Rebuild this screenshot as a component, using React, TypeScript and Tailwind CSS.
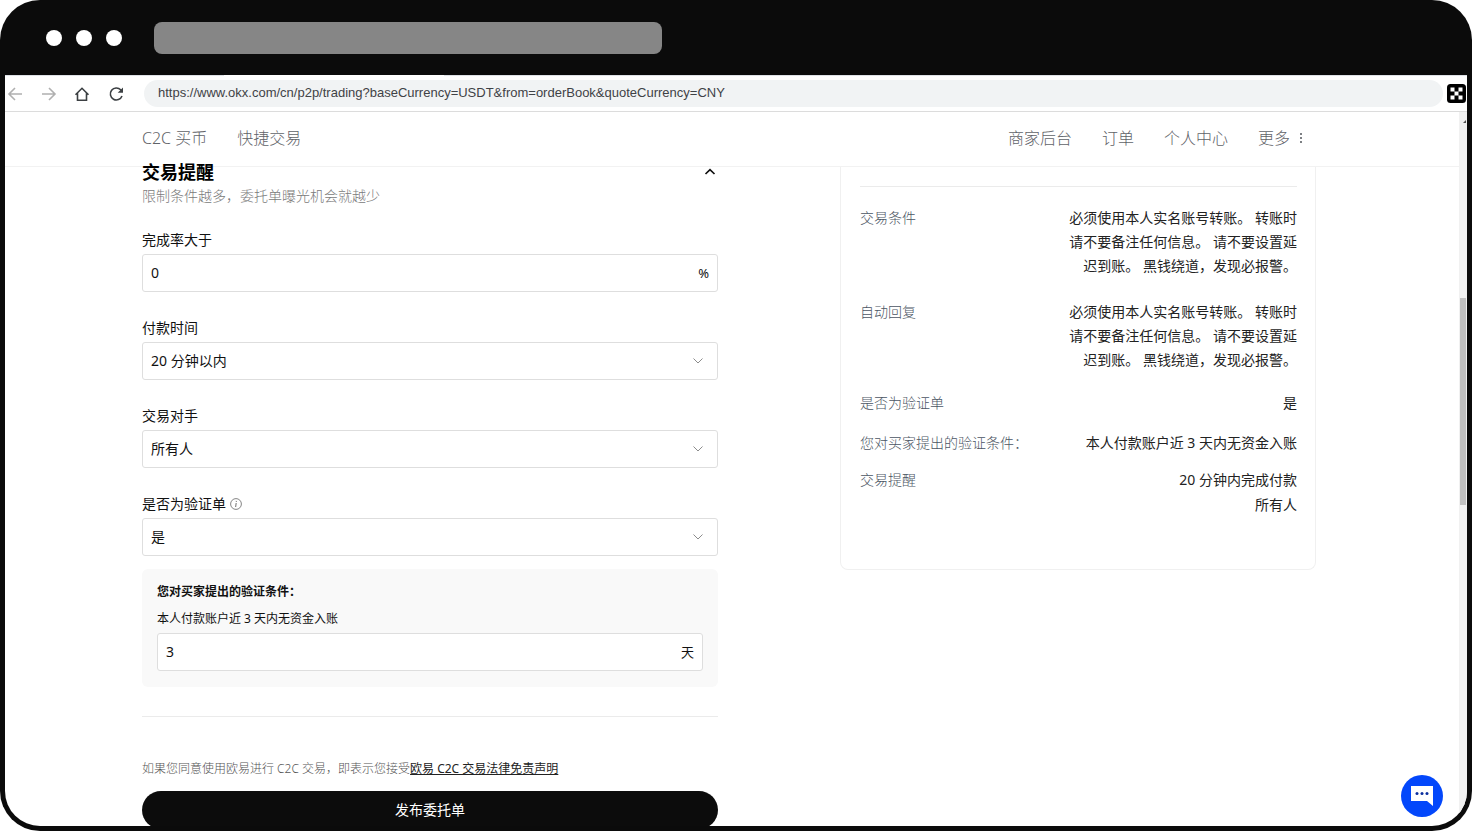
import { useState, type ReactNode } from "react";
import clsx from "clsx";

const TERMS =
  "必须使用本人实名账号转账。 转账时请不要备注任何信息。 请不要设置延迟到账。 黑钱绕道，发现必报警。";

const PAGE_URL =
  "https://www.okx.com/cn/p2p/trading?baseCurrency=USDT&from=orderBook&quoteCurrency=CNY";

function WindowBar() {
  return (
    <div className="flex h-[75px] shrink-0 items-center gap-3.5 pl-[41px]">
      <span className="size-4 rounded-full bg-white" />
      <span className="size-4 rounded-full bg-white" />
      <span className="size-4 rounded-full bg-white" />
      <span className="ml-[18px] h-8 w-[508px] rounded-lg bg-[#868686]" />
    </div>
  );
}

function ToolButton({ label, className, children }: { label: string; className: string; children: ReactNode }) {
  return (
    <button type="button" aria-label={label} className={className}>
      <svg width="18" height="18" viewBox="0 0 18 18" fill="none" stroke="currentColor" strokeWidth="1.6">
        {children}
      </svg>
    </button>
  );
}

function Toolbar() {
  return (
    <div className="shrink-0 border-b border-[#dcdcdc] bg-white">
      <div className="flex h-px">
        <span className="w-[15%] bg-[#dee1e6]" />
        <span className="w-[15%]" />
        <span className="flex-1 bg-[#dee1e6]" />
      </div>
      <div className="flex h-[35px] items-center pr-px">
        <div className="flex gap-4 pl-px">
          <ToolButton label="后退" className="text-[#b0b0b0]">
            <path d="M16 9H3M9 3L3 9l6 6" />
          </ToolButton>
          <ToolButton label="前进" className="text-[#b0b0b0]">
            <path d="M2 9h13M9 3l6 6-6 6" />
          </ToolButton>
          <ToolButton label="主页" className="text-[#3c4043]">
            <path d="M1.500 9.700L8 3.300l6.500 6.400M3.500 8.200v7h9v-7" />
          </ToolButton>
          <ToolButton label="刷新" className="text-[#3c4043]">
            <path d="M14 11a6 6 0 1 1-1.300-6.200l1.800 1.800" />
            <path d="M15 2.500v5.300H9.700z" fill="currentColor" stroke="none" />
          </ToolButton>
        </div>
        <input
          aria-label="网址"
          readOnly
          value={PAGE_URL}
          className="mr-1 ml-[18px] h-[27px] min-w-0 flex-1 rounded-full bg-[#f1f3f4] px-3.5 pb-[3px] font-['Liberation_Sans',sans-serif] text-[13px] text-[#3f4246] outline-none"
        />
        <button type="button" aria-label="OKX">
          <svg width="19" height="19" viewBox="0 0 19 19">
            <rect width="19" height="19" rx="3.500" fill="#000" />
            <path
              d="M3.500 3.500h4v4h-4zM11.500 3.500h4v4h-4zM7.500 7.500h4v4h-4zM3.500 11.500h4v4h-4zM11.500 11.500h4v4h-4z"
              fill="#fff"
            />
          </svg>
        </button>
      </div>
    </div>
  );
}

function SiteHeader() {
  return (
    <header className="flex h-[55px] shrink-0 items-center justify-between border-b border-[#f2f2f2] bg-white pr-[155px] pb-[3px] pl-[137px] text-base font-light text-[#5f6368]">
      <nav className="flex gap-[30px]">
        <a href="#c2c">C2C 买币</a>
        <a href="#express">快捷交易</a>
      </nav>
      <nav className="flex items-center gap-[30px]">
        <a href="#merchant">商家后台</a>
        <a href="#orders">订单</a>
        <a href="#profile">个人中心</a>
        <button type="button" className="flex items-center gap-2.5">
          更多
          <svg width="4" height="12" viewBox="0 0 4 12" fill="#7d8084">
            <rect x="0" y="1" width="2" height="2" />
            <rect x="0" y="5" width="2" height="2" />
            <rect x="0" y="9" width="2" height="2" />
          </svg>
        </button>
      </nav>
    </header>
  );
}

function NumberField({ id, suffix, initial }: { id: string; suffix: string; initial: string }) {
  const [value, setValue] = useState(initial);
  return (
    <div className="flex h-[38px] items-center rounded-[3px] border border-[#dedede] bg-white px-2">
      <input
        id={id}
        value={value}
        onChange={(e) => setValue(e.target.value)}
        className="min-w-0 flex-1 bg-transparent outline-none"
      />
      <span className="text-[13px]">{suffix}</span>
    </div>
  );
}

function SelectField({ id, options }: { id: string; options: string[] }) {
  return (
    <div className="relative">
      <select
        id={id}
        className="block h-[38px] w-full appearance-none rounded-[3px] border border-[#dedede] bg-white px-2 outline-none"
      >
        {options.map((o) => (
          <option key={o}>{o}</option>
        ))}
      </select>
      <svg
        className="pointer-events-none absolute top-[15px] right-3.5"
        width="12"
        height="8"
        viewBox="0 0 12 8"
        fill="none"
        stroke="#8c8c8c"
      >
        <path d="M1.500 1.500L6 6l4.500-4.500" />
      </svg>
    </div>
  );
}

function Field({ id, label, info, children }: { id: string; label: string; info?: boolean; children: ReactNode }) {
  return (
    <div className="flex flex-col gap-[3px]">
      <div className="flex items-center gap-1">
        <label htmlFor={id}>{label}</label>
        {info && (
          <svg width="12" height="12" viewBox="0 0 12 12" fill="none" stroke="#858585">
            <circle cx="6" cy="6" r="5.400" />
            <path d="M6.400 2.900l-.1 1M6.200 5L5.600 9" strokeWidth="1.200" />
          </svg>
        )}
      </div>
      {children}
    </div>
  );
}

function OrderForm() {
  const [open, setOpen] = useState(true);
  return (
    <form
      className="-mt-2 w-[576px] text-sm leading-[22px] text-[#111]"
      onSubmit={(e) => e.preventDefault()}
    >
      <div className="flex items-center justify-between">
        <h2 className="text-lg leading-[26px] font-bold text-black">交易提醒</h2>
        <button type="button" aria-label="展开或收起" onClick={() => setOpen(!open)} className="pr-0.5">
          <svg
            className={clsx(!open && "rotate-180")}
            width="12"
            height="8"
            viewBox="0 0 12 8"
            fill="none"
            stroke="#111"
            strokeWidth="1.700"
          >
            <path d="M1.500 6L6 1.700 10.500 6" />
          </svg>
        </button>
      </div>
      <p className="font-light text-[#7a7a7a]">限制条件越多，委托单曝光机会就越少</p>

      {open && (
        <div className="mt-[22px] flex flex-col gap-[25px]">
          <Field id="rate" label="完成率大于">
            <NumberField id="rate" suffix="%" initial="0" />
          </Field>
          <Field id="paytime" label="付款时间">
            <SelectField id="paytime" options={["20 分钟以内", "15 分钟以内"]} />
          </Field>
          <Field id="peer" label="交易对手">
            <SelectField id="peer" options={["所有人", "认证商家"]} />
          </Field>
          <Field id="verify" label="是否为验证单" info>
            <SelectField id="verify" options={["是", "否"]} />
          </Field>
        </div>
      )}

      <div className="mt-[13px] rounded-md bg-[#f9f9f9] px-[15px] pt-3.5 pb-4">
        <p className="text-xs leading-[18px] font-bold">您对买家提出的验证条件：</p>
        <label htmlFor="days" className="mt-[9px] mb-[5px] block text-xs leading-[18px]">
          本人付款账户近 3 天内无资金入账
        </label>
        <NumberField id="days" suffix="天" initial="3" />
      </div>

      <hr className="mt-[29px] border-[#ebebeb]" />

      <p className="mt-[42px] text-xs leading-5 font-light text-[#555]">
        如果您同意使用欧易进行 C2C 交易，即表示您接受
        <a href="#disclaimer" className="font-normal text-[#222] underline">
          欧易 C2C 交易法律免责声明
        </a>
      </p>
      <button type="submit" className="mt-3 h-[38px] w-full rounded-full bg-[#0c0c0c] text-white">
        发布委托单
      </button>
    </form>
  );
}

function SummaryRow({ label, className, children }: { label: string; className?: string; children: ReactNode }) {
  return (
    <div className={clsx("flex justify-between", className)}>
      <dt className="font-light text-[#4b5563]">{label}</dt>
      <dd className="max-w-[232px] text-right text-[#222]">{children}</dd>
    </div>
  );
}

function Summary() {
  return (
    <aside className="w-[476px] self-start rounded-b-lg border border-t-0 border-[#f0f0f0] pt-[19px] pr-[18px] pb-[52px] pl-[19px] text-sm leading-6">
      <hr className="border-[#ebebeb]" />
      <dl className="mt-[19px]">
        <SummaryRow label="交易条件">{TERMS}</SummaryRow>
        <SummaryRow label="自动回复" className="mt-[22px]">
          {TERMS}
        </SummaryRow>
        <SummaryRow label="是否为验证单" className="mt-[19px]">
          是
        </SummaryRow>
        <SummaryRow label="您对买家提出的验证条件：" className="mt-4">
          本人付款账户近 3 天内无资金入账
        </SummaryRow>
        <SummaryRow label="交易提醒" className="mt-[13px]">
          <p>20 分钟内完成付款</p>
          <p className="mt-px">所有人</p>
        </SummaryRow>
      </dl>
    </aside>
  );
}

function Scrollbar() {
  return (
    <div className="flex w-2 shrink-0 flex-col bg-[#f1f1f1] px-px" aria-hidden="true">
      <div className="flex h-[26%] justify-end pt-2">
        <svg width="3" height="4" viewBox="0 0 3 4">
          <path d="M0 3L3 0v3z" fill="#505050" />
        </svg>
      </div>
      <div className="h-[29%] bg-[#c1c1c1]" />
    </div>
  );
}

export default function App() {
  return (
    <div className="h-screen bg-white pb-px font-['Noto_Sans','Noto_Sans_CJK_SC',sans-serif]">
      <div className="flex h-full flex-col rounded-[40px] bg-[#0b0b0b] px-[5px] pb-[5px]">
        <WindowBar />
        <div className="relative flex min-h-0 flex-1 flex-col overflow-hidden rounded-b-[35px] bg-white">
          <Toolbar />
          <div className="flex min-h-0 flex-1">
            <div className="flex min-w-0 flex-1 flex-col">
              <SiteHeader />
              <main className="flex min-h-0 flex-1 justify-between pr-[143px] pl-[137px]">
                <OrderForm />
                <Summary />
              </main>
            </div>
            <Scrollbar />
          </div>
          <button
            type="button"
            aria-label="在线客服"
            className="absolute right-6 bottom-[9px] flex size-[42px] items-center justify-center rounded-full bg-[#0347fb]"
          >
            <svg width="22" height="20" viewBox="0 0 22 20">
              <path d="M0 0h22v20l-6-5H0z" fill="#fff" />
              <circle cx="6" cy="7.500" r="1.500" fill="#0b2f9e" />
              <circle cx="11" cy="7.500" r="1.500" fill="#0b2f9e" />
              <circle cx="16" cy="7.500" r="1.500" fill="#0b2f9e" />
            </svg>
          </button>
        </div>
      </div>
    </div>
  );
}
